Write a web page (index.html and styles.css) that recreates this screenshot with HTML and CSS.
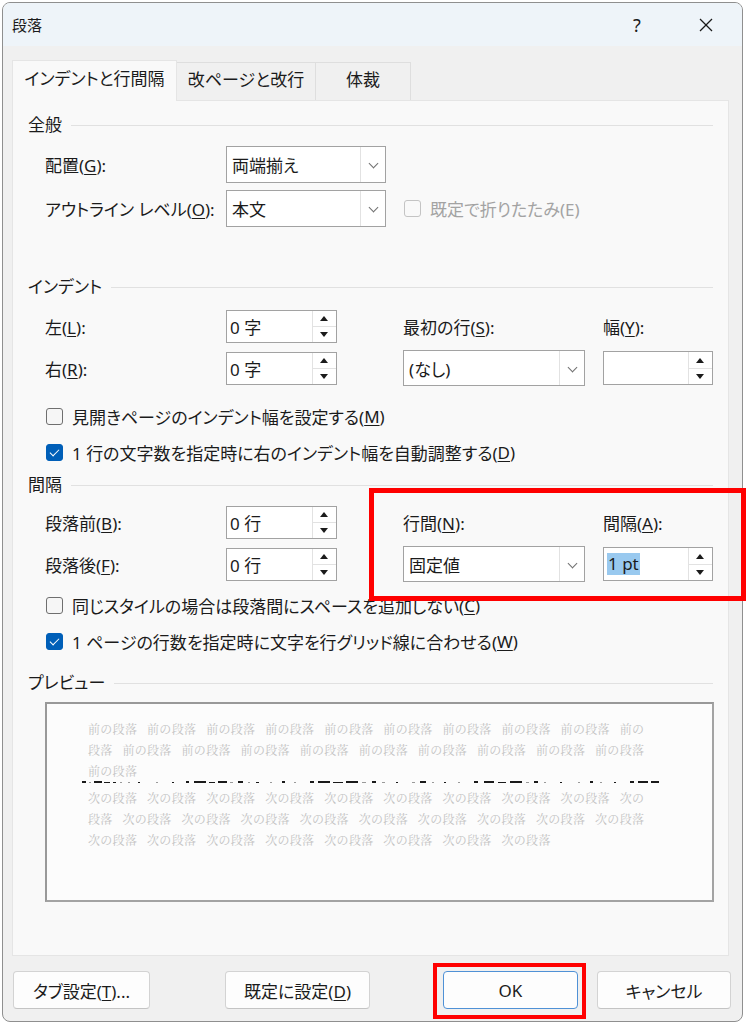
FILE: index.html
```html
<!DOCTYPE html>
<html lang="ja">
<head>
    <meta charset="UTF-8">
    <title>段落</title>
    <link rel="stylesheet" href="styles.css">
</head>
<body>
    <div class="window">
        <div class="titlebar">
            <span class="title">段落</span>
            <span class="help">?</span>
            <span class="close">
                <svg width="14" height="14" viewBox="0 0 14 14" fill="none" stroke="#1b1b1b" stroke-width="1.3">
                    <line x1="1" y1="1" x2="13" y2="13"></line>
                    <line x1="13" y1="1" x2="1" y2="13"></line>
                </svg>
            </span>
        </div>

        <div class="tabs">
            <div class="tab tab-1 active">インデントと行間隔</div>
            <div class="tab tab-2">改ページと改行</div>
            <div class="tab tab-3">体裁</div>
        </div>

        <div class="panel">
            <!-- 全般 -->
            <div class="group-title">全般</div>
            <div class="grid grid-general">
                <span class="lbl">配置(<u>G</u>):</span>
                <div class="combo combo-sm">両端揃え<span class="arrow"></span></div>
                <span></span><span></span>

                <span class="lbl">アウトライン レベル(<u>O</u>):</span>
                <div class="combo combo-sm">本文<span class="arrow"></span></div>
                <div class="check disabled span-2"><span class="box"></span>既定で折りたたみ(E)</div>
            </div>

            <!-- インデント -->
            <div class="group-title gt-indent">インデント</div>
            <div class="grid grid-rows grid-indent">
                <span class="lbl">左(<u>L</u>):</span>
                <div class="spin"><span class="val">0 字</span><span class="btns"><i class="up"></i><i class="down"></i></span></div>
                <span class="lbl">最初の行(<u>S</u>):</span>
                <span class="lbl">幅(<u>Y</u>):</span>

                <span class="lbl">右(<u>R</u>):</span>
                <div class="spin"><span class="val">0 字</span><span class="btns"><i class="up"></i><i class="down"></i></span></div>
                <div class="combo combo-lg">(なし)<span class="arrow"></span></div>
                <div class="spin spin-sm"><span class="val"></span><span class="btns"><i class="up"></i><i class="down"></i></span></div>
            </div>
            <div class="checks checks-indent">
                <div class="check"><span class="box"></span>見開きページのインデント幅を設定する(<u>M</u>)</div>
                <div class="check"><span class="box checked"></span>1 行の文字数を指定時に右のインデント幅を自動調整する(<u>D</u>)</div>
            </div>

            <!-- 間隔 -->
            <div class="group-title gt-spacing">間隔</div>
            <div class="grid grid-rows grid-spacing">
                <span class="lbl">段落前(<u>B</u>):</span>
                <div class="spin"><span class="val">0 行</span><span class="btns"><i class="up"></i><i class="down"></i></span></div>
                <span class="lbl">行間(<u>N</u>):</span>
                <span class="lbl">間隔(<u>A</u>):</span>

                <span class="lbl">段落後(<u>F</u>):</span>
                <div class="spin"><span class="val">0 行</span><span class="btns"><i class="up"></i><i class="down"></i></span></div>
                <div class="combo combo-lg">固定値<span class="arrow"></span></div>
                <div class="spin spin-sm"><span class="val"><span class="selected">1 pt</span></span><span class="btns"><i class="up"></i><i class="down"></i></span></div>
            </div>
            <div class="checks checks-spacing">
                <div class="check"><span class="box"></span>同じスタイルの場合は段落間にスペースを追加しない(<u>C</u>)</div>
                <div class="check"><span class="box checked"></span>1 ページの行数を指定時に文字を行グリッド線に合わせる(<u>W</u>)</div>
            </div>

            <!-- プレビュー -->
            <div class="group-title gt-preview">プレビュー</div>
            <div class="preview">
                <div class="pv-line">前の段落 前の段落 前の段落 前の段落 前の段落 前の段落 前の段落 前の段落 前の段落 前の</div>
                <div class="pv-line">段落 前の段落 前の段落 前の段落 前の段落 前の段落 前の段落 前の段落 前の段落 前の段落</div>
                <div class="pv-line">前の段落</div>
                <svg class="pv-current" width="580" height="6" viewBox="0 0 580 6">
                    <g fill="#1a1a1a">
                        <rect x="0" y="2" width="4" height="2"></rect>
                        <rect x="12" y="2" width="8" height="2"></rect>
                        <rect x="22" y="3" width="6" height="1"></rect>
                        <rect x="31" y="3" width="3" height="1"></rect>
                        <rect x="56" y="3" width="2" height="1"></rect>
                        <rect x="90" y="3" width="2" height="1"></rect>
                        <rect x="104" y="2" width="3" height="2"></rect>
                        <rect x="112" y="2" width="12" height="2"></rect>
                        <rect x="127" y="3" width="6" height="1"></rect>
                        <rect x="136" y="2" width="9" height="2"></rect>
                        <rect x="156" y="2" width="5" height="2"></rect>
                        <rect x="174" y="3" width="3" height="1"></rect>
                        <rect x="200" y="2" width="3" height="2"></rect>
                        <rect x="228" y="2" width="4" height="2"></rect>
                        <rect x="236" y="2" width="12" height="2"></rect>
                        <rect x="251" y="3" width="10" height="1"></rect>
                        <rect x="264" y="2" width="12" height="2"></rect>
                        <rect x="290" y="2" width="4" height="2"></rect>
                        <rect x="314" y="3" width="2" height="1"></rect>
                        <rect x="338" y="2" width="6" height="2"></rect>
                        <rect x="362" y="3" width="2" height="1"></rect>
                        <rect x="392" y="2" width="4" height="2"></rect>
                        <rect x="402" y="2" width="10" height="2"></rect>
                        <rect x="416" y="3" width="8" height="1"></rect>
                        <rect x="428" y="2" width="12" height="2"></rect>
                        <rect x="452" y="2" width="4" height="2"></rect>
                        <rect x="478" y="3" width="2" height="1"></rect>
                        <rect x="508" y="2" width="3" height="2"></rect>
                        <rect x="532" y="3" width="2" height="1"></rect>
                        <rect x="548" y="2" width="4" height="2"></rect>
                        <rect x="556" y="2" width="10" height="2"></rect>
                        <rect x="569" y="2" width="8" height="2"></rect>
                    </g>
                    <g fill="#9a9a9a">
                        <rect x="7" y="3" width="2" height="1"></rect>
                        <rect x="38" y="3" width="2" height="1"></rect>
                        <rect x="46" y="3" width="2" height="1"></rect>
                        <rect x="74" y="3" width="2" height="1"></rect>
                        <rect x="148" y="3" width="3" height="1"></rect>
                        <rect x="166" y="3" width="2" height="1"></rect>
                        <rect x="188" y="3" width="2" height="1"></rect>
                        <rect x="212" y="3" width="2" height="1"></rect>
                        <rect x="280" y="3" width="4" height="1"></rect>
                        <rect x="300" y="3" width="3" height="1"></rect>
                        <rect x="330" y="3" width="3" height="1"></rect>
                        <rect x="350" y="3" width="2" height="1"></rect>
                        <rect x="376" y="3" width="2" height="1"></rect>
                        <rect x="444" y="3" width="3" height="1"></rect>
                        <rect x="462" y="3" width="2" height="1"></rect>
                        <rect x="496" y="3" width="2" height="1"></rect>
                        <rect x="518" y="3" width="2" height="1"></rect>
                    </g>
                </svg>
                <div class="pv-line">次の段落 次の段落 次の段落 次の段落 次の段落 次の段落 次の段落 次の段落 次の段落 次の</div>
                <div class="pv-line">段落 次の段落 次の段落 次の段落 次の段落 次の段落 次の段落 次の段落 次の段落 次の段落</div>
                <div class="pv-line">次の段落 次の段落 次の段落 次の段落 次の段落 次の段落 次の段落 次の段落</div>
            </div>
        </div>

        <div class="footer">
            <button class="btn btn-tab">タブ設定(<u>T</u>)...</button>
            <button class="btn btn-default">既定に設定(<u>D</u>)</button>
            <div class="footer-right">
                <button class="btn btn-ok">OK</button>
                <button class="btn btn-cancel">キャンセル</button>
            </div>
        </div>
    </div>

    <div class="mark mark-spacing"></div>
    <div class="mark mark-ok"></div>
</body>
</html>
```

FILE: styles.css
```css
:root {
    --text-color: #1b1b1b;
    --window-bg: #f0f0f0;
    --panel-bg: #f9f9f9;
    --field-border: #a2a2a2;
    --line-color: #e1e1e1;
    --accent: #005fb8;
}

* {
    box-sizing: border-box;
}

body {
    margin: 0;
    width: 746px;
    height: 1024px;
    overflow: hidden;
    position: relative;
    background: #ffffff;
    color: var(--text-color);
    font-family: "Noto Sans", "Noto Sans CJK JP", sans-serif;
    font-size: 17px;
    font-feature-settings: "palt";
}

u {
    text-decoration-thickness: 1px;
    text-underline-offset: 2px;
}

.window {
    margin: 2px 0 0 2px;
    width: 741px;
    height: 1020px;
    border: 1px solid #8f8f8f;
    border-radius: 8px;
    background: var(--window-bg);
    overflow: hidden;
    display: flex;
    flex-direction: column;
}

/* タイトルバー */
.titlebar {
    height: 43px;
    flex-shrink: 0;
    background: #eef4f9;
    display: flex;
    align-items: center;
    padding-left: 9px;
    padding-right: 13px;
}

.title {
    font-size: 15px;
}

.help {
    margin-left: auto;
    width: 46px;
    text-align: center;
    font-size: 18px;
    margin-right: 23px;
}

.close {
    width: 46px;
    display: flex;
    justify-content: center;
}

/* タブ */
.tabs {
    margin: 14px 0 0 9px;
    height: 40px;
    display: flex;
    align-items: flex-end;
    position: relative;
    z-index: 1;
}

.tab {
    height: 38px;
    display: flex;
    align-items: center;
    justify-content: center;
    background: #f0f0f0;
    border: 1px solid #dedede;
    border-bottom: none;
    padding-bottom: 7px;
}

.tab.active {
    height: 41px;
    margin-bottom: -1px;
    background: var(--panel-bg);
    border-color: #e5e5e5;
    padding-bottom: 7px;
}

.tab-1 { width: 165px; }
.tab-2 { width: 139px; border-left: none; }
.tab-3 { width: 95px; border-left: none; }

/* パネル */
.panel {
    margin: 0 13px 0 9px;
    height: 856px;
    flex-shrink: 0;
    background: var(--panel-bg);
    border: 1px solid #e5e5e5;
    padding: 14px 15px 0 15px;
}

.group-title {
    height: 20px;
    line-height: 20px;
    display: flex;
    align-items: center;
}

.group-title::after {
    content: "";
    flex: 1;
    height: 1px;
    background: var(--line-color);
    margin-left: 9px;
}

.gt-indent { margin-top: 50px; }
.gt-spacing { margin-top: 5px; }
.gt-preview { margin-top: 14px; }

.grid {
    margin-left: 17px;
    display: grid;
    grid-template-columns: 181px 177px 200px 110px;
    align-items: center;
}

.grid-general {
    margin-top: 11px;
    grid-template-rows: 37px 37px;
    row-gap: 7px;
}

.grid-rows {
    grid-template-rows: 34px 36px;
    row-gap: 7px;
}

.grid-indent { margin-top: 12px; }
.grid-spacing { margin-top: 10px; }

.span-2 {
    grid-column: span 2;
}

.lbl {
    white-space: nowrap;
}

/* コンボボックス */
.combo {
    height: 100%;
    background: #ffffff;
    border: 1px solid var(--field-border);
    display: flex;
    align-items: center;
    padding-left: 5px;
    white-space: nowrap;
}

.combo-sm { width: 160px; }
.combo-lg { width: 182px; }

.arrow {
    margin-left: auto;
    width: 25px;
    height: 100%;
    border-left: 1px solid #e2e2e2;
    position: relative;
}

.arrow::after {
    content: "";
    position: absolute;
    left: 9px;
    top: 13px;
    width: 6px;
    height: 6px;
    border-right: 1px solid #707070;
    border-bottom: 1px solid #707070;
    transform: rotate(45deg);
}

/* スピンボックス */
.spin {
    width: 111px;
    height: 33px;
    background: #ffffff;
    border: 1px solid var(--field-border);
    display: flex;
}

.spin-sm {
    width: 110px;
    height: 34px;
}

.spin .val {
    flex: 1;
    display: flex;
    align-items: center;
    padding-left: 3px;
    white-space: nowrap;
}

.selected {
    background: #99c9ef;
    padding: 0 1px;
    line-height: 22px;
}

.btns {
    width: 24px;
    display: flex;
    flex-direction: column;
    border-left: 1px solid #e2e2e2;
}

.btns i {
    flex: 1;
    position: relative;
}

.btns .up {
    border-bottom: 1px solid #e2e2e2;
}

.btns i::after {
    content: "";
    position: absolute;
    left: 7px;
    top: 50%;
    margin-top: -2px;
    border-left: 4px solid transparent;
    border-right: 4px solid transparent;
}

.btns .up::after {
    border-bottom: 5px solid #1b1b1b;
}

.btns .down::after {
    border-top: 5px solid #1b1b1b;
}

/* チェックボックス */
.checks {
    margin-left: 18px;
}

.checks-indent { margin-top: 12px; }
.checks-spacing { margin-top: 5px; }

.check {
    height: 36px;
    display: flex;
    align-items: center;
    white-space: nowrap;
}

.grid .check {
    margin-left: 1px;
}

.box {
    width: 17px;
    height: 17px;
    border: 1px solid #6f6f6f;
    border-radius: 3px;
    background: #f6f6f6;
    margin-right: 9px;
    flex-shrink: 0;
    position: relative;
}

.box.checked {
    background: var(--accent);
    border-color: var(--accent);
}

.box.checked::after {
    content: "";
    position: absolute;
    left: 5px;
    top: 2px;
    width: 4px;
    height: 8px;
    border-right: 1.5px solid #ffffff;
    border-bottom: 1.5px solid #ffffff;
    transform: rotate(45deg);
}

.check.disabled {
    color: #a3a3a3;
}

.check.disabled .box {
    border-color: #c4c4c4;
    background: #f9f9f9;
}

/* プレビュー */
.preview {
    margin: 9px 0 0 17px;
    width: 669px;
    height: 200px;
    background: #fcfcfc;
    border: 2px solid #a3a3a3;
    border-top-color: #999999;
    border-left-color: #999999;
    padding: 14px 0 0 41px;
}

.pv-line {
    height: 21px;
    line-height: 21px;
    font-family: "Noto Serif CJK JP", "Noto Sans CJK JP", serif;
    font-size: 12px;
    letter-spacing: 0.3px;
    word-spacing: 6.5px;
    color: #c3c3c3;
    white-space: nowrap;
    font-feature-settings: normal;
}

.pv-current {
    display: block;
    margin-left: -6px;
    margin-top: -2px;
    margin-bottom: 2px;
}

/* ボタン */
.footer {
    margin-top: 15px;
    display: flex;
    padding: 0 11px 0 10px;
}

.footer-right {
    margin-left: auto;
    display: flex;
    gap: 19px;
}

.btn {
    height: 38px;
    font-family: inherit;
    font-size: 17px;
    font-feature-settings: "palt";
    color: var(--text-color);
    background: #fdfdfd;
    border: 1px solid #d3d3d3;
    border-bottom-color: #c4c4c4;
    border-radius: 4px;
    padding: 0;
}

.btn-tab { width: 137px; }
.btn-default { width: 145px; margin-left: 75px; }
.btn-ok { width: 135px; border-color: #4f91d6; }
.btn-cancel { width: 134px; }

/* 赤枠 */
.mark {
    position: absolute;
    border: 5px solid #ff0000;
}

.mark-spacing {
    left: 369px;
    top: 488px;
    width: 377px;
    height: 113px;
}

.mark-ok {
    left: 433px;
    top: 963px;
    width: 153px;
    height: 56px;
    border-width: 4px;
}
```
